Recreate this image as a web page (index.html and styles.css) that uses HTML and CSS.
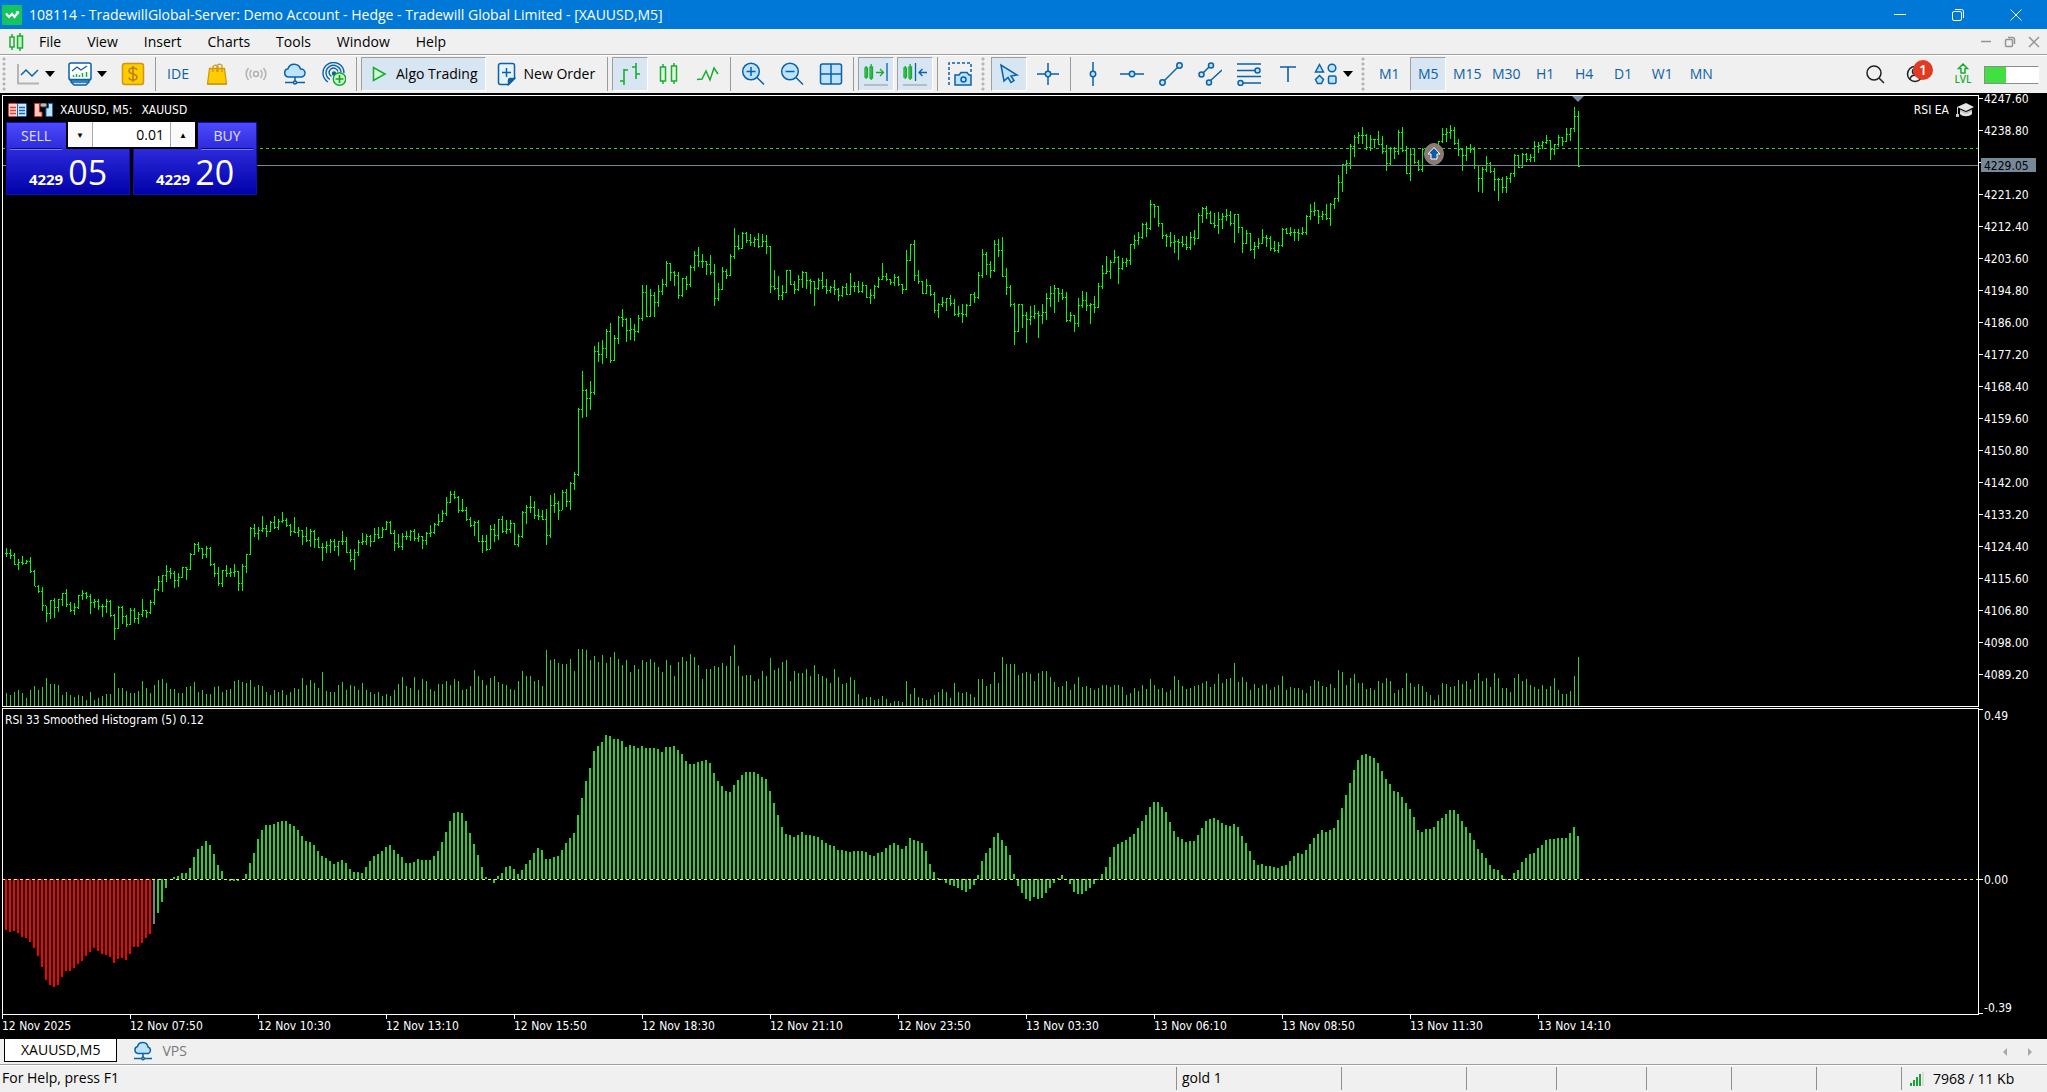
FILE: index.html
```html
<!DOCTYPE html>
<html lang="en">
<head>
<meta charset="utf-8">
<title>108114 - TradewillGlobal-Server: Demo Account - Hedge - Tradewill Global Limited - [XAUUSD,M5]</title>
<link rel="stylesheet" href="styles.css">
</head>
<body>
<header class="titlebar">
  <svg class="app-logo" viewBox="0 0 20 20"><rect width="20" height="20" fill="#14c45c"/><path d="M4 8.500l3 3.500 3-3 2.500 3 4-5.500" fill="none" stroke="#fff" stroke-width="2.200"/><path d="M13.500 6h3.500v3.500" fill="#fff"/></svg>
  <h1 class="title">108114 - TradewillGlobal-Server: Demo Account - Hedge - Tradewill Global Limited - [XAUUSD,M5]</h1>
  <button class="win-btn" aria-label="Minimize"><svg viewBox="0 0 12 12"><path d="M0 5.500h12"/></svg></button>
  <button class="win-btn" aria-label="Restore"><svg viewBox="0 0 12 12"><rect x=".5" y="2.500" width="9" height="9" rx="1.500"/><path d="M3 .5h6.500a2 2 0 0 1 2 2V9"/></svg></button>
  <button class="win-btn" aria-label="Close"><svg viewBox="0 0 12 12"><path d="M.5.5l11 11M11.500.5l-11 11"/></svg></button>
</header>

<nav class="menubar">
  <svg class="menu-icon" viewBox="0 0 15 18" fill="none" stroke="#18ad30" stroke-width="1.500"><rect x="1" y="4" width="4" height="10"/><path d="M3 1v3M3 14v3M11 0v3M11 15v3"/><rect x="8.500" y="3" width="5" height="12" fill="#b6f5bd"/></svg>
  <button class="menu">File</button>
  <button class="menu">View</button>
  <button class="menu">Insert</button>
  <button class="menu">Charts</button>
  <button class="menu">Tools</button>
  <button class="menu">Window</button>
  <button class="menu">Help</button>
  <span class="spacer"></span>
  <button class="mdi-btn" aria-label="Minimize chart"><svg viewBox="0 0 12 12"><path d="M1 5.500h10"/></svg></button>
  <button class="mdi-btn" aria-label="Restore chart"><svg viewBox="0 0 12 12"><rect x="1.500" y="3.500" width="7" height="7" rx="1"/><path d="M4 1.500h4.500a2 2 0 0 1 2 2V8"/></svg></button>
  <button class="mdi-btn" aria-label="Close chart"><svg viewBox="0 0 12 12"><path d="M1 1l10 10M11 1L1 11"/></svg></button>
</nav>

<div class="toolbar" role="toolbar">
  <span class="grip"></span>
  <button class="tool tool-drop" aria-label="Chart type"><svg class="ico" viewBox="0 0 24 24" fill="none"><path d="M2 2v19.500h21" stroke="#b4b4b4" stroke-width="2"/><path d="M5 13l5-5 6 6 6-6" stroke="#0a62a8" stroke-width="1.500"/></svg><i class="caret"></i></button>
  <button class="tool tool-drop" aria-label="Indicators"><svg class="ico" viewBox="0 0 24 24" fill="none" stroke="#0a62a8" stroke-width="1.500"><path d="M3 18v2l3 3h12l3-3v-2" fill="#bde3ff"/><rect x="1" y="1" width="22" height="17" rx="2" fill="#fff"/><path d="M1 17.500h22M3 20h18" /><path d="M4 9l5-4 4 3 6-4" stroke-width="1.300"/><path d="M5.500 15v-2M8.500 15v-3M11.500 15v-2M14.500 15v-4M18.500 15v-5" stroke="#18b030"/></svg><i class="caret"></i></button>
  <button class="tool" aria-label="Symbols"><svg class="ico" viewBox="0 0 24 24"><rect x="1.500" y="1.500" width="21" height="21" rx="2.500" fill="#ffcc00" stroke="#cf9710" stroke-width="1.500"/><path d="M16 8c-.5-1.500-2-2-4-2-2.500 0-4 1-4 3 0 4 8 2 8 6 0 2-1.500 3-4 3s-4-.8-4-2.500M12 4v16" fill="none" stroke="#b87e10" stroke-width="1.500"/></svg></button>
  <span class="sep"></span>
  <button class="tool tool-blue" >IDE</button>
  <button class="tool" aria-label="Market"><svg class="ico" viewBox="0 0 24 24" fill="none" stroke="#d09a10" stroke-width="1.300"><path d="M4.500 6.500h15l2 15.500h-19z" fill="#ffcc00"/><path d="M8 10V4.500a3 3 0 0 1 5 0V10M12 10V3.500a3 3 0 0 1 5 0V10M2.500 22h19"/></svg></button>
  <button class="tool" aria-label="Signals"><svg class="ico" viewBox="0 0 24 24" fill="none" stroke="#b0b0b0" stroke-width="1.500"><circle cx="12" cy="12" r="2.500"/><path d="M7.500 8a6 6 0 0 0 0 8M16.500 8a6 6 0 0 1 0 8M4.500 6a9 9 0 0 0 0 12M19.500 6a9 9 0 0 1 0 12"/></svg></button>
  <button class="tool" aria-label="VPS"><svg class="ico" viewBox="0 0 24 24" fill="none" stroke="#0a62a8" stroke-width="1.500"><path d="M6 15a4.200 4.200 0 0 1-1-8.300A6.500 6.500 0 0 1 17.500 7a4 4 0 0 1 1 8z" fill="#bde3ff"/><path d="M12 15v4M2 20.500h8M14 20.500h8"/><circle cx="12" cy="20.500" r="1.500"/></svg></button>
  <button class="tool" aria-label="Copy trading"><svg class="ico" viewBox="0 0 24 24" fill="none" stroke="#0a62a8" stroke-width="1.400"><path d="M6 20a10.500 10.500 0 1 1 16-9"/><path d="M8 17.500a7.500 7.500 0 1 1 11-7.500"/><path d="M9.500 14.500a4.500 4.500 0 1 1 6.500-5"/><circle cx="12" cy="11.500" r="1.500" fill="#0a62a8"/><circle cx="17.500" cy="17" r="6.200" fill="#ccf8cc" stroke="#10a52a"/><path d="M17.500 13v8M13.500 17h8" stroke="#10a52a" stroke-width="1.700"/></svg></button>
  <span class="sep"></span>
  <button class="tool tool-text is-on"><svg class="ico" viewBox="0 0 24 24"><path d="M6.500 5.500v13L18 12z" fill="#d3fbd6" stroke="#10ac2a" stroke-width="1.500"/></svg>Algo Trading</button>
  <button class="tool tool-text"><svg class="ico" viewBox="0 0 24 24" fill="none" stroke="#0a62a8" stroke-width="1.500"><path d="M5.500 1.500h12a2 2 0 0 1 2 2v13l-6 6h-8a2 2 0 0 1-2-2v-17a2 2 0 0 1 2-2z" fill="#e6f4ff"/><path d="M19.500 16.500h-4a2 2 0 0 0-2 2v4z" fill="#0a62a8"/><path d="M11.500 6v9M7 10.500h9"/></svg>New Order</button>
  <span class="sep"></span>
  <button class="tool is-on" aria-label="Bar chart"><svg class="ico" viewBox="0 0 24 24" fill="none" stroke="#18ad30" stroke-width="1.600"><path d="M6 7v16M2 19h4M6 8h4M18 1v16M14 5h4M18 12h4"/></svg></button>
  <button class="tool" aria-label="Candles"><svg class="ico" viewBox="0 0 24 24" fill="none" stroke="#18ad30" stroke-width="1.500"><rect x="3.500" y="5" width="5" height="14" fill="#dcfbdc"/><rect x="14.500" y="4" width="5" height="15" fill="#dcfbdc"/><path d="M6 2v3M6 19v3M17 1v3M17 19v3"/></svg></button>
  <button class="tool" aria-label="Line chart"><svg class="ico" viewBox="0 0 24 24" fill="none" stroke="#18ad30" stroke-width="1.500"><path d="M1 17.500l5-.5 4-8 4 9 4-12 4 6"/></svg></button>
  <span class="sep"></span>
  <button class="tool" aria-label="Zoom in"><svg class="ico" viewBox="0 0 24 24" fill="none" stroke="#0a62a8" stroke-width="1.500"><circle cx="10" cy="9.500" r="8.300" fill="#bde3ff"/><path d="M16 15.500l7 7M10 5v9M5.500 9.500h9"/></svg></button>
  <button class="tool" aria-label="Zoom out"><svg class="ico" viewBox="0 0 24 24" fill="none" stroke="#0a62a8" stroke-width="1.500"><circle cx="10" cy="9.500" r="8.300" fill="#bde3ff"/><path d="M16 15.500l7 7M5.500 9.500h9"/></svg></button>
  <button class="tool" aria-label="Tile windows"><svg class="ico" viewBox="0 0 24 24" fill="none" stroke="#0a62a8" stroke-width="1.500"><rect x="1.500" y="2" width="21" height="20" rx="2" fill="#bde3ff"/><path d="M12 2v20M1.500 12h21"/></svg></button>
  <span class="sep"></span>
  <button class="tool is-on" aria-label="Auto scroll"><svg class="ico" viewBox="0 0 24 24" fill="none" stroke="#18ad30" stroke-width="1.300"><rect x="1" y="6" width="2.500" height="9"/><rect x="6" y="5" width="2.500" height="11"/><path d="M2.200 4v13M7.200 2v16M12 10.500h7M16 7l3.500 3.500L16 14"/><path d="M23 1v18" stroke="#0a62a8"/><path d="M0 23h24" stroke="#a6a6a6"/></svg></button>
  <button class="tool is-on" aria-label="Chart shift"><svg class="ico" viewBox="0 0 24 24" fill="none" stroke="#18ad30" stroke-width="1.300"><rect x="1" y="6" width="2.500" height="9"/><rect x="6" y="5" width="2.500" height="11"/><path d="M2.200 4v13M7.200 2v16"/><path d="M12.500 1v18M24 10.500h-8M19.500 7L16 10.500l3.500 3.500" stroke="#0a62a8"/><path d="M0 23h24" stroke="#a6a6a6"/></svg></button>
  <span class="sep"></span>
  <button class="tool" aria-label="Screenshot"><svg class="ico" viewBox="0 0 24 24" fill="none" stroke="#0a62a8" stroke-width="1.500"><path d="M1 23V1h22v10" stroke-dasharray="3 2"/><path d="M9 13h2l2-2.500h6l2 2.500h2v10H7V13z" fill="#bde3ff"/><circle cx="15.500" cy="17.500" r="2.500"/></svg></button>
  <span class="grip"></span>
  <button class="tool is-on" aria-label="Cursor"><svg class="ico" viewBox="0 0 24 24"><path d="M4 3l3 16 4-3.500 3 5 3-2-3-4.500 6-1z" fill="#bde3ff" stroke="#0a62a8" stroke-width="1.500"/></svg></button>
  <button class="tool" aria-label="Crosshair"><svg class="ico" viewBox="0 0 24 24" fill="none" stroke="#0a62a8" stroke-width="1.500"><path d="M12 1v8M12 15v8M1 12h8M15 12h8"/><circle cx="12" cy="12" r="2.700" fill="#bde3ff"/></svg></button>
  <span class="sep"></span>
  <button class="tool" aria-label="Vertical line"><svg class="ico" viewBox="0 0 24 24" fill="none" stroke="#0a62a8" stroke-width="1.500"><path d="M12 0v9M12 15v9"/><circle cx="12" cy="12" r="2.700" fill="#bde3ff"/></svg></button>
  <button class="tool" aria-label="Horizontal line"><svg class="ico" viewBox="0 0 24 24" fill="none" stroke="#0a62a8" stroke-width="1.500"><path d="M0 12h9M15 12h9"/><circle cx="12" cy="12" r="2.700" fill="#bde3ff"/></svg></button>
  <button class="tool" aria-label="Trend line"><svg class="ico" viewBox="0 0 24 24" fill="none" stroke="#0a62a8" stroke-width="1.500"><path d="M5 19L19 5"/><circle cx="3.500" cy="20.500" r="2.700" fill="#bde3ff"/><circle cx="20.500" cy="3.500" r="2.700" fill="#bde3ff"/></svg></button>
  <button class="tool" aria-label="Channel"><svg class="ico" viewBox="0 0 24 24" fill="none" stroke="#0a62a8" stroke-width="1.500"><path d="M5 11l7-7M12 19L24 8"/><circle cx="3.500" cy="12.500" r="2.500" fill="#bde3ff"/><circle cx="13" cy="3.500" r="2.500" fill="#bde3ff"/><circle cx="11" cy="20.500" r="2.500" fill="#bde3ff"/></svg></button>
  <button class="tool" aria-label="Fibonacci"><svg class="ico" viewBox="0 0 24 24" fill="none" stroke="#0a62a8" stroke-width="1.500"><path d="M0 2h24M0 8.500h18M0 14.500h24M6 21h18"/><circle cx="20.500" cy="8.500" r="2.500" fill="#bde3ff"/><circle cx="3.500" cy="21" r="2.500" fill="#bde3ff"/></svg></button>
  <button class="tool" aria-label="Text"><svg class="ico" viewBox="0 0 24 24" fill="none" stroke="#0a62a8" stroke-width="1.600"><path d="M4 5h16M12 5v15"/></svg></button>
  <button class="tool tool-drop" aria-label="Shapes"><svg class="ico" viewBox="0 0 24 24" fill="#bde3ff" stroke="#0a62a8" stroke-width="1.500"><path d="M5.500 2.500L9.500 10h-8z"/><circle cx="18" cy="6" r="3.800"/><path d="M5.500 13.500L9.500 17.500 7.500 21.500h-4l-2-4z"/><rect x="14.500" y="14" width="7.500" height="7.500" rx="1.500"/></svg><i class="caret"></i></button>
  <span class="grip"></span>
  <button class="tool tool-blue">M1</button>
  <button class="tool tool-blue is-on">M5</button>
  <button class="tool tool-blue">M15</button>
  <button class="tool tool-blue">M30</button>
  <button class="tool tool-blue">H1</button>
  <button class="tool tool-blue">H4</button>
  <button class="tool tool-blue">D1</button>
  <button class="tool tool-blue">W1</button>
  <button class="tool tool-blue">MN</button>
  <span class="spacer"></span>
  <button class="tool" aria-label="Search"><svg class="ico" viewBox="0 0 24 24" fill="none" stroke="#202020" stroke-width="1.500"><circle cx="11" cy="11" r="7"/><path d="M16 16l5 5"/></svg></button>
  <button class="tool account" aria-label="Account"><svg class="ico" viewBox="0 0 24 24" fill="none" stroke="#202020" stroke-width="1.500"><circle cx="11" cy="12" r="7.500"/><circle cx="11" cy="9.500" r="2.500"/><path d="M6 17c1-5 9-5 10 0"/></svg><b class="badge">1</b></button>
  <button class="tool level" aria-label="Level"><svg class="level-ico" viewBox="0 0 12 11"><path d="M6 1l4.500 4.500H8V10H4V5.500H1.500z" fill="none" stroke="#18ad30" stroke-width="1.500"/></svg>LVL</button>
  <span class="battery"></span>
</div>

<main class="workspace">
  <section class="pane">
    <svg class="plot" id="price" viewBox="0 0 1975 610" preserveAspectRatio="none"></svg>
    <div class="chart-head">
      <svg class="head-ico" viewBox="0 0 19 14"><rect x=".5" y=".5" width="9" height="13" rx="1" fill="#ffd9d5" stroke="#e04038"/><rect x="9.500" y=".5" width="9" height="13" rx="1" fill="#cfeaff" stroke="#1768b4"/><path d="M2 4.500h6M2 7.500h6M2 10.500h6" stroke="#e04038" stroke-width="1.500"/><path d="M11 4.500h6M11 7.500h6M11 10.500h6" stroke="#1768b4" stroke-width="1.500"/></svg>
      <svg class="head-ico" viewBox="0 0 19 14"><path d="M.5.5h5V9H8v4.500H.5z" fill="#ffc9c4" stroke="#d8322c"/><path d="M18.500.5h-4V5H12v8.500h6.500z" fill="#bde3ff" stroke="#1768b4"/><rect x="6" y="0" width="7" height="4" rx="2" fill="#bbb" stroke="#444"/></svg>
      <span>XAUUSD, M5:</span><span class="head-name">XAUUSD</span>
      <span class="spacer"></span>
      <span>RSI EA</span>
      <svg class="cap-ico" viewBox="0 0 20 16"><path d="M2 5L11 1l8 4-8 4zM5 8v4c3 3 9 3 12 0V8l-6 3z" fill="#e4e4e4"/><path d="M5 7.500l6 2.500 6-2.500v2L11 12 5 9.500z" fill="#c0c0c0"/><path d="M2.500 5v7" stroke="#c8c8c8"/><path d="M1 12h3v3H1z" fill="#c8c8c8"/></svg>
    </div>
    <form class="trade">
      <button type="button" class="deal deal-sell"><span class="deal-name">SELL</span><span class="deal-price"><b>4229</b><span class="deal-big">05</span></span></button>
      <button type="button" class="deal deal-buy"><span class="deal-name">BUY</span><span class="deal-price"><b>4229</b><span class="deal-big">20</span></span></button>
      <div class="lots">
        <button type="button" class="lots-btn" aria-label="Less">▼</button>
        <input class="lots-value" type="text" value="0.01" aria-label="Volume">
        <button type="button" class="lots-btn" aria-label="More">▲</button>
      </div>
    </form>
    <svg class="entry" viewBox="0 0 20 22"><ellipse cx="10" cy="11" rx="9.500" ry="10.500" fill="#90796a" stroke="#778899"/><path d="M10 4.500l6 6.500h-3v5H7v-5H4z" fill="#0a5ca8" stroke="#fff"/></svg>
    <svg class="shift-mark" viewBox="0 0 12 6"><path d="M0 0h12L6 6z" fill="#778899"/></svg>
  </section>
  <ol class="axis price-axis">
    <li>4247.60</li><li>4238.80</li><li></li><li>4221.20</li><li>4212.40</li><li>4203.60</li><li>4194.80</li><li>4186.00</li><li>4177.20</li><li>4168.40</li><li>4159.60</li><li>4150.80</li><li>4142.00</li><li>4133.20</li><li>4124.40</li><li>4115.60</li><li>4106.80</li><li>4098.00</li><li>4089.20</li>
    <li class="last-price">4229.05</li>
  </ol>
  <section class="pane">
    <svg class="plot" id="rsi" viewBox="0 0 1975 305" preserveAspectRatio="none"></svg>
    <h2 class="pane-title">RSI 33 Smoothed Histogram (5) 0.12</h2>
  </section>
  <ol class="axis rsi-axis"><li>0.49</li><li>0.00</li><li>-0.39</li></ol>
  <ol class="time-axis">
    <li>12 Nov 2025</li><li>12 Nov 07:50</li><li>12 Nov 10:30</li><li>12 Nov 13:10</li><li>12 Nov 15:50</li><li>12 Nov 18:30</li><li>12 Nov 21:10</li><li>12 Nov 23:50</li><li>13 Nov 03:30</li><li>13 Nov 06:10</li><li>13 Nov 08:50</li><li>13 Nov 11:30</li><li>13 Nov 14:10</li>
  </ol>
</main>

<nav class="tabs">
  <button class="tab is-current">XAUUSD,M5</button>
  <button class="tab"><svg class="tab-ico" viewBox="0 0 20 20" fill="none" stroke="#0a62a8" stroke-width="1.500"><path d="M5 12.500a3.600 3.600 0 0 1-.5-7A5.400 5.400 0 0 1 15 6a3.500 3.500 0 0 1 .5 6.500z" fill="#bde3ff"/><path d="M10 12.500v4M1 17.500h7M12 17.500h7"/><circle cx="10" cy="17.500" r="1.300"/></svg>VPS</button>
  <span class="spacer"></span>
  <button class="scroll" aria-label="Scroll left"><svg viewBox="0 0 4 8"><path d="M4 0v8L0 4z" fill="#a8a8a8"/></svg></button>
  <button class="scroll" aria-label="Scroll right"><svg viewBox="0 0 4 8"><path d="M0 0v8l4-4z" fill="#a8a8a8"/></svg></button>
</nav>

<footer class="status">
  <span class="cell cell-help">For Help, press F1</span>
  <span class="cell cell-profile">gold 1</span>
  <span class="cell cell-time"></span>
  <span class="cell cell-quote"></span><span class="cell cell-quote"></span><span class="cell"></span><span class="cell"></span><span class="cell"></span>
  <span class="cell cell-net"><svg class="net-ico" viewBox="0 0 16 14"><path d="M1 11h2v3H1zM4 8h2v6H4zM7 5h2v9H7zM10 2h2v12h-2z" fill="#14a832"/><path d="M13 0h2v14h-2z" fill="#dcdcdc"/></svg>7968 / 11 Kb</span>
</footer>
<script src="chart.js"></script>
</body>
</html>
```
FILE: styles.css
```css
* { box-sizing: border-box; }

body {
  margin: 0;
  min-height: 100vh;
  display: flex;
  flex-direction: column;
  background: #f0f0f0;
  color: #000;
  font: 14px/20px "Open Sans", "Noto Sans", sans-serif;
}

button, input { font: inherit; color: inherit; margin: 0; padding: 0; border: 0; background: none; }
ol { list-style: none; margin: 0; padding: 0; }
h1, h2 { margin: 0; font: inherit; }
svg { display: block; }
.spacer { flex: 1; }

/* title bar */
.titlebar { display: flex; align-items: center; height: 29px; padding: 0 2px; background: #0078d7; color: #fff; }
.app-logo { width: 20px; height: 20px; }
.title { flex: 1; margin-left: 7px; }
.win-btn { width: 58px; height: 29px; display: grid; place-items: center; }
.win-btn svg { width: 12px; height: 12px; fill: none; stroke: #fff; }

/* menu */
.menubar { display: flex; align-items: center; height: 26px; padding: 0 1px 0 9px; border-bottom: 1px solid #a0a0a0; }
.menu-icon { width: 15px; height: 18px; margin-right: 2px; }
.menu { padding: 0 13px; }
.mdi-btn { width: 24px; height: 24px; display: grid; place-items: center; }
.mdi-btn svg { width: 12px; height: 12px; fill: none; stroke: #949494; stroke-width: 1.500; }

/* toolbar */
.toolbar { display: flex; gap: 3px; height: 38px; padding: 1px 8px 2px 2px; border-top: 1px solid #fff; }
.grip { width: 6px; margin-right: 1px; background: radial-gradient(circle at 2px 2px, #b4b4b4 1px, transparent 2px) 0 0 / 6px 5px repeat-y; }
.grip:first-child { margin-right: 0; }
.sep { width: 1px; height: 34px; margin: 0 1px; background: #9a9a9a; }
.tool { width: 36px; height: 34px; flex: none; display: flex; align-items: center; justify-content: center; border: 1px solid transparent; white-space: nowrap; }
.tool.is-on { background: #d8e5f2; border-color: #a0a0a0 #fff #fff #a0a0a0; }
.tool-drop { width: 49px; gap: 5px; }
.tool-blue { color: #0a62a8; }
.tool-text { width: auto; padding: 0 7px 0 5px; gap: 5px; justify-content: flex-start; }
.ico { width: 24px; height: 24px; flex: none; }
.caret { border: 5px solid transparent; border-top: 6px solid #000; border-bottom: 0; }
.account { position: relative; width: 46px; justify-content: flex-start; padding-left: 7px; }
.badge { position: absolute; left: 16px; top: 2px; width: 20px; height: 20px; border-radius: 50%; background: #e23a20; color: #fff; font-weight: 600; text-align: center; }
.level { flex-direction: column; justify-content: flex-start; padding-top: 5px; color: #18ad30; font-weight: 600; font-size: 10px; line-height: 10px; }
.level-ico { width: 12px; height: 11px; }
.battery { width: 55px; height: 18px; margin-top: 9px; border: 1px solid #8c8c8c; border-right-color: #fff; background: linear-gradient(90deg, #40e040 40%, #fff 40%); }

/* chart window */
.workspace {
  flex: 1;
  display: grid;
  grid-template-columns: 1fr 68px;
  grid-template-rows: minmax(0, 612fr) minmax(0, 307fr) 23px;
  row-gap: 1px;
  padding: 2px 0 0 2px;
  min-height: 600px;
  background: #000;
  color: #fff;
  font: 12px/14px "DejaVu Sans Condensed", "Noto Sans", sans-serif;
}
.pane { position: relative; border: 1px solid #fff; min-width: 0; }
.plot { position: absolute; width: 100%; height: 100%; shape-rendering: crispEdges; }
.pane-title { position: absolute; left: 2px; top: 4px; }
.chart-head { position: absolute; left: 5px; right: 3px; top: 6px; display: flex; align-items: center; height: 16px; }
.head-ico { width: 19px; height: 14px; margin-right: 7px; }
.head-name { margin-left: 9px; }
.cap-ico { width: 20px; height: 16px; margin-left: 6px; }
.entry { position: absolute; left: calc(100% * 1421 / 1975); top: calc(100% * 47 / 610); width: 20px; height: 22px; }
.shift-mark { position: absolute; left: calc(100% * 1569 / 1975); top: 0; width: 12px; height: 6px; }

/* one-click trading */
.trade { position: absolute; left: 3px; top: 26px; display: flex; gap: 3px; background: #000; font-family: "Open Sans", "Noto Sans", sans-serif; }
.deal { width: 124px; height: 73px; background: linear-gradient(#4f4bff, #2a28d8 40%, #0000a8); color: #fff; display: flex; flex-direction: column; box-shadow: inset 0 0 0 1px #1010b4; }
.deal-sell { clip-path: polygon(0 0, 60px 0, 60px 27px, 100% 27px, 100% 100%, 0 100%); align-items: flex-start; }
.deal-buy { clip-path: polygon(65px 0, 100% 0, 100% 100%, 0 100%, 0 27px, 65px 27px); align-items: flex-end; }
.deal-name { width: 52px; height: 27px; margin: 0 4px; font-size: 14px; line-height: 27px; text-align: center; border-bottom: 1px solid #0b0b80; box-shadow: 0 1px #7a78ff; color: #e0e0ff; }
.deal-price { align-self: stretch; display: flex; align-items: baseline; justify-content: center; gap: 5px; margin-top: 3px; font-size: 15px; line-height: 40px; }
.deal-big { font-size: 34px; }
.lots { position: absolute; left: 62px; top: 0; width: 127px; height: 25px; display: flex; background: #fff; color: #000; }
.lots-btn { width: 24px; font-size: 8px; background: #fafafa; }
.lots-value { flex: 1; min-width: 0; padding-right: 6px; text-align: right; font-size: 14px; border: 1px solid #a8a8a8; border-width: 0 1px; }

/* axes */
.axis li { position: relative; padding: 1px 0 0 5px; }
.axis li::before { content: ""; position: absolute; left: 0; top: 50%; width: 4px; height: 1px; background: #fff; }
.price-axis { position: relative; display: flex; flex-direction: column; margin: -13px 0 17px; }
.price-axis li { flex: 1; display: flex; align-items: center; }
.price-axis .last-price { position: absolute; left: 2px; right: 11px; top: calc(100% * 70 / 608 + 6px); height: 14px; padding-left: 3px; background: #778899; color: #000; }
.price-axis .last-price::before { display: none; }
.rsi-axis { display: grid; grid-template-rows: 164px 1fr 14px; }
.rsi-axis li::before { top: 7px; }
.rsi-axis li:first-child::before { top: 1px; }
.rsi-axis li:last-child { padding-top: 0; }
.rsi-axis li:last-child::before { top: 12px; }
.time-axis { grid-column: 1 / -1; display: flex; margin-right: 68px; }
.time-axis li { position: relative; flex: 0 0 calc(100% * 128 / 1977); padding-top: 3px; white-space: nowrap; }
.time-axis li::before { content: ""; position: absolute; left: 0; top: -1px; width: 1px; height: 4px; background: #fff; }

/* chart tabs */
.tabs { display: flex; height: 26px; padding-left: 4px; border-bottom: 1px solid #a0a0a0; }
.tab { display: flex; align-items: center; gap: 9px; height: 23px; padding: 0 16px; color: #787878; }
.tab.is-current { background: #fff; color: #000; border: 1px solid #000; border-top: 0; }
.tab-ico { width: 20px; height: 20px; }
.scroll { width: 25px; display: grid; place-items: center; }
.scroll:last-child { margin-right: 5px; }
.scroll svg { width: 4px; height: 8px; }

/* status bar */
.status { display: flex; height: 27px; padding: 1px 0 2px; border-top: 1px solid #fff; }
.cell { width: 85px; padding-left: 5px; line-height: 22px; border-left: 1px solid #909090; white-space: nowrap; }
.cell-help { flex: 1; padding-left: 2px; border-left: 0; }
.cell-profile { width: 165px; }
.cell-time { width: 125px; }
.cell-quote { width: 90px; }
.cell-net { width: 146px; display: flex; align-items: center; gap: 8px; padding-left: 7px; }
.net-ico { width: 16px; height: 14px; }
```
FILE: chart.js
```js
/* Levels are stored in thirds of a plot row, measured down from each block's top row. */
const STEP = 4;
const FIRST = 3;

/* high low close */
const quotes = [
  { top: 364, data: `264 291 280,267 299 286,281 315 314,297 330 307,288 315 310,300 312 304,291 339 334,331 380 379,375 399 394,381 453 437,438 486 461,420 477 421,414 474 442,417 456 418,399 438 400,387 441 433,426 456 451,429 465 442,405 447 406,390 420 400,396 417 409,402 462 427,417 444 424,417 450 439,432 471 439,417 459 424,420 471 466,462 540 505,438 507 442,438 492 469,465 501 493,444 495 451,444 489 475,456 492 463,417 471 451,450 474 457,420 462 427,387 435 388,348 393 364,345 396 346,315 366 334,324 357 340,333 384 361,339 381 352,321 354 322,321 360 328,279 330 283,249 285 253,246 276 265,264 297 283,258 294 265,261 318 313,309 351 340,321 378 370,330 381 331,315 351 340,324 351 337,312 351 334,333 393 370,312 393 319,282 339 283,201 285 205,192 231 220,201 240 211,168 216 205,195 231 214,183 216 187,168 207 202,177 210 184,156 189 181,174 201 196,192 228 214,171 219 217,201 231 211,210 255 229,201 246 241,207 261 214,210 264 238,231 264 262,249 303 262,243 279 256,237 279 244,237 273 259,243 288 244,213 255 244,231 279 277,267 306 298,267 330 277,240 288 247,219 255 244,222 255 229,225 261 244,204 246 223,201 237 232,201 234 208,183 210 187,183 222 220,210 273 250,222 264 259,219 270 229,213 240 229,210 243 214,207 243 235,219 246 229,228 267 241,216 255 220,195 231 217,189 222 193,162 198 184,150 186 160,111 168 127,93 129 103,93 117 112,108 159 151,117 156 151,141 183 178,171 201 196,183 228 187,180 246 244,225 279 244,225 273 268,195 267 208,192 246 226,177 240 178,168 219 214,180 222 208,180 219 190,189 255 253,222 261 229,153 234 157,135 192 142,108 159 142,123 177 166,147 180 169,150 180 178,147 255 226,105 234 136,99 159 130,123 180 151` },
  { top: 104, data: `870 930 877,867 921 904,846 930 850,816 870 823,624 828 628,513 654 571,567 651 595,543 630 577,438 585 454,426 486 463,420 492 445,387 474 394,369 489 481,405 483 415,348 432 352,327 381 358,354 426 391,354 420 388,372 423 394,345 399 355,255 363 277,255 351 349,267 351 286,276 351 307,255 321 274,237 285 253,183 261 190,189 243 217,213 258 226,216 297 286,234 291 235,228 270 253,195 261 202,153 213 166,141 201 184,162 204 184,183 225 193,165 225 217,192 318 295,249 303 268,201 270 214,207 237 226,162 228 169,84 177 139,105 150 145,96 147 100,96 129 121,102 138 127,111 141 118,99 144 139,102 141 124,105 162 139,138 279 259,210 270 265,228 300 286,255 300 277,210 279 211,210 255 253,243 282 268,225 273 238,213 264 217,216 267 241,237 282 244,243 318 265,234 270 241,216 267 259,237 282 271,258 279 262,240 285 268,264 303 286,258 291 262,249 285 283,219 285 259,246 276 259,243 279 274,246 279 256,255 294 292,267 312 286,255 297 259,231 264 238,189 240 229,219 243 238,237 255 247,222 258 232,228 258 253,252 282 268,150 270 181,132 183 133,120 243 226,210 252 244,243 282 280,237 282 256,255 288 283,276 339 331,309 354 313,291 321 307,294 333 295,285 318 310,297 348 343,318 351 340,312 369 343,312 351 316,282 318 283,276 309 292,216 297 226,147 234 163,156 225 193,183 234 211,120 216 133,117 171 151,111 231 229,204 285 262,255 321 313,309 435 394,312 396 313,312 384 346,336 429 358,318 375 349,315 357 340,333 414 346,312 372 337,279 360 295,258 321 280,255 339 265,264 306 280,267 300 292,276 366 361,336 366 346,345 396 370,294 381 316,273 324 301,276 333 316,309 372 313,288 339 322,249 324 259` },
  { top: 4, data: `495 567 520,468 522 514,480 537 487,450 489 472,468 552 505,474 510 487,474 501 481,432 495 433,405 447 421,396 435 412,369 417 373,366 411 385,300 390 313,312 354 319,318 381 370,369 417 406,402 441 409,396 441 427,405 459 424,417 480 427,408 441 433,408 450 442,396 450 412,390 435 415,339 417 346,321 369 325,318 357 340,333 372 370,339 384 376,336 402 358,339 387 349,327 363 346,333 378 370,342 429 343,342 399 382,381 459 430,390 432 400,399 453 448,426 477 439,414 447 430,387 432 412,405 441 415,408 453 445,423 456 451,426 459 436,384 441 388,384 402 400,381 408 397,387 423 397,387 423 400,381 405 397,345 405 349,312 360 334,306 348 331,330 372 349,333 360 343,312 360 355,309 378 313,294 327 295,225 306 247,192 276 193,180 222 190,132 207 139,105 171 112,96 132 106,81 132 106,102 150 142,105 153 118,117 144 118,93 135 133,108 162 154,135 213 190,141 195 145,141 177 154,90 165 97,81 156 151,138 222 220,144 243 163,144 192 187,180 213 208,144 216 148,147 175 160,150 180 160,135 170 140,123 150 124,84 129 103,84 126 97,75 117 91,81 135 130,117 168 148,147 213 166,138 183 145,132 159 148,141 207 196,195 276 235,201 279 208,168 216 190,186 219 214,204 273 238,234 303 238,231 279 262,228 279 235,219 249 220,162 231 166,165 204 202,159 204 163,159 186 178,162 186 172,123 186 139,126 159 136,123 147 127,105 132 121,120 180 148,132 165 133,105 141 112,111 138 124,84 126 103,84 123 85,21 96 49,33 201 199` }
];

/* tick volume: tops, counted against each block's floor */
const volumes = [
  { floor: 738, data: "699,705,696,690,699,714,690,678,690,681,654,672,672,675,705,696,705,711,705,708,720,696,720,714,708,702,702,639,684,684,693,699,699,693,663,684,699,675,660,657,669,687,687,699,699,681,678,666,696,690,702,702,681,678,696,690,687,663,660,666,669,660,681,675,678,696,705,690,696,690,705,696,684,687,654,675,660,669,684,636,693,696,696,675,666,690,675,678,690,669,690,696,702,696,708,702,708,690,672,651,678,684,651,690,657,663,687,693,672,672,663,675,657,663,690,687,678,630,648,660,675,654,648,666,672,675,687,690,663,633,648,648,663,660,678,570,600,597,609" },
  { floor: 1518, data: "1392,1392,1377,1413,1347,1347,1350,1380,1368,1386,1365,1389,1371,1356,1377,1395,1380,1416,1395,1407,1380,1386,1377,1386,1401,1416,1380,1395,1428,1386,1371,1383,1362,1371,1395,1437,1407,1407,1398,1401,1389,1398,1368,1335,1398,1428,1425,1425,1443,1437,1413,1428,1374,1410,1404,1386,1380,1443,1413,1419,1419,1407,1428,1395,1422,1428,1434,1449,1407,1431,1452,1449,1431,1440,1482,1497,1491,1491,1500,1497,1488,1497,1509,1503,1503,1506,1443,1482,1464,1491,1494,1500,1497,1485,1476,1467,1476,1494,1449,1476,1479,1476,1482,1491,1437,1437,1458,1452,1416,1449,1371,1392,1392,1392,1425,1419,1416,1422,1443,1419,1413,1413,1431,1446,1461,1458,1443,1470,1452,1431,1461,1458,1464,1470,1464" },
  { floor: 198, data: "135,135,141,135,135,141,165,159,144,153,135,147,117,135,147,144,156,150,108,120,138,147,144,138,135,129,123,141,132,102,129,117,114,69,126,111,126,150,132,144,135,132,150,141,135,108,150,141,144,144,150,159,138,120,123,138,141,132,144,90,96,135,114,102,129,129,147,144,150,123,129,114,123,159,150,144,99,129,141,132,138,156,165,180,165,129,132,141,138,120,132,123,147,120,99,123,114,141,99,114,144,144,156,114,102,123,117,135,141,147,135,147,138,114,150,162,162,153,108,51" }
];

/* smoothed RSI: levels against each block's zero */
const rsi = [
  { zero: 537, data: "690,696,693,699,711,714,726,744,768,801,840,855,861,855,831,813,813,804,792,783,768,756,744,753,762,765,771,789,777,774,780,762,741,741,729,714,702,672,639,606,564,538,531,528,519,519,504,471,447,438,423,435,462,495,513,538,543,543,543,538,522,489,459,417,390,375,375,372,366,363,363,372,378,390,408,423,426,435,453,468,474,483,492,486,480,489,507,516,516,519,501,483,468,462,453,441,435,450,462,471,489,489,486,477,480,480,480,468,453,426,396,363,339,336,339,363,399,432,465,501,531,538,549,528,519,501,498,507,522,510,492,480,459,444,450,477,477,471,468,450,429,414,399,345,294,243,204,153,138,126,105,108,117,117,123,141,135,138,144,138,144,144,144,147,156,141,141,138,150,162,183,192,192,186,183,180,189,219,243,258,273,276,255,240,225,216,216,216,222,231,237,273,309,345,381,402,405,411,405,396,405,405,408,411,420,429,435,438,450,450,453,456,453,453,453,456,465,468,459,456,444,435,429,435,447,438,414,420,423,429,453,492,516,534,540,549,555,558,564,570,576,567,555,525,483,459,444,411,399,420,438,465,522,558,579,597,603,591,597,594,579,564,549,534,525,538,552,576,582,582,573,564,552,540" },
  { zero: 717, data: "702,681,651,621,612,606,600,591,582,564,543,525,501,486,486,501,516,546,573,591,597,606,603,603,585,564,543,537,534,540,549,555,558,552,561,588,609,633,660,675,672,678,678,681,684,678,675,663,648,639,642,630,612,594,582,570,576,570,564,540,504,465,429,390,360,345,342,348,354,369,393,417,432,453,456,471,489,507,531,570,576,567,567,561,543,534,522,510,510,522,543,561,579,600,627,639,654,675,687,690,705,720,718,699,690,666,654,642,639,624,615,600,597,597,594,594,594,579,561,588" }
];

const box = (x, y, w, h) => `M${x} ${y}h${w}v${h}h${-w}z`;
const path = (d, color) => `<path d="${d}" fill="${color}"/>`;
const dashes = (y, color) => `<path d="M-1 ${y}.5H1975" stroke="${color}" stroke-dasharray="3 3"/>`;

let bars = "";
let n = 0;
let open = null;
for (const block of quotes) {
  for (const row of block.data.split(",")) {
    const [high, low, close] = row.split(" ").map(v => block.top + Math.floor(v / 3));
    const x = FIRST + STEP * n++;
    if (open === null) open = close;
    bars += box(x, high, 1, low - high) + box(x + 1, close, 1, 1) + box(x - 1, open, 1, 1);
    open = close;
  }
}

let ticks = "";
n = 0;
for (const block of volumes) {
  for (const top of block.data.split(",")) {
    const h = (block.floor - top) / 3;
    ticks += box(FIRST + STEP * n++, 610 - h, 1, h);
  }
}

document.getElementById("price").innerHTML =
  dashes(52, "#32cd32") + path(ticks, "#32cd32") + path(bars, "#00ff00") + path(box(0, 69, 1975, 1), "#778899");

const ZERO = 170;
const hist = { "#ff0000": "", "#808080": "", "#32cd32": "" };
n = 0;
for (const block of rsi) {
  for (const v of block.data.split(",")) {
    const h = Math.round((block.zero - v) / 3);
    const color = n < 37 ? "#ff0000" : n === 37 ? "#808080" : "#32cd32";
    if (h) hist[color] += box(FIRST - 1 + STEP * n, h > 0 ? ZERO - h : ZERO, 2, Math.abs(h));
    n++;
  }
}
document.getElementById("rsi").innerHTML =
  Object.entries(hist).map(([color, d]) => path(d, color)).join("") + dashes(ZERO, "#ffff00");
```
